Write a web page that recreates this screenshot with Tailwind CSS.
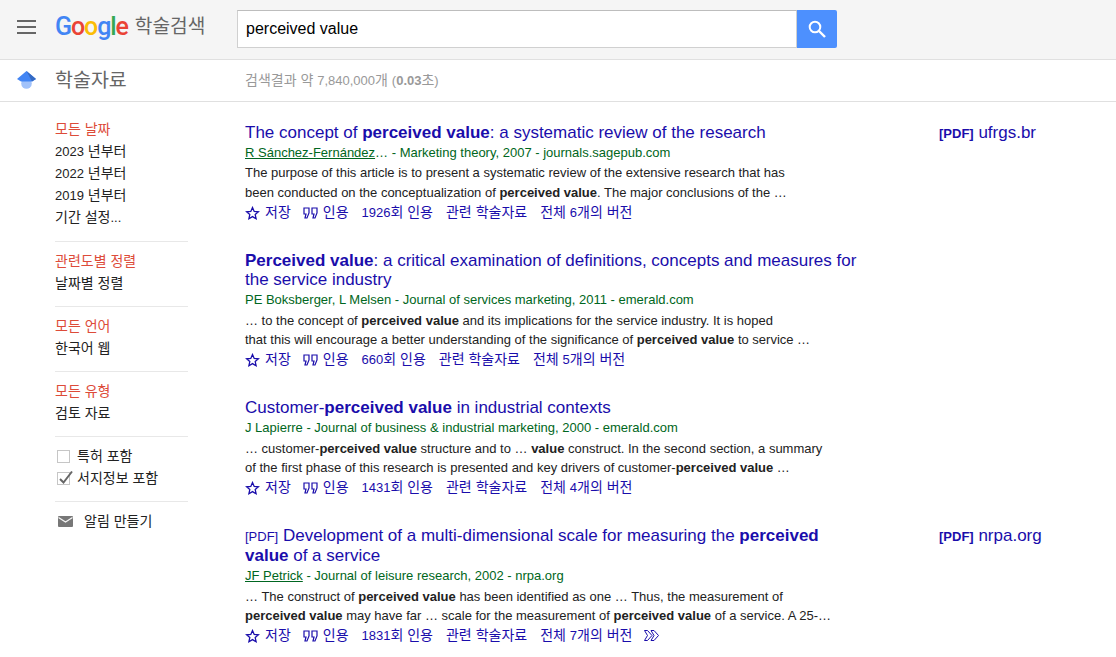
<!DOCTYPE html>
<html lang="ko">
<head>
    <meta charset="UTF-8">
    <title>Google 학술검색</title>
    <script src="https://cdn.jsdelivr.net/npm/@tailwindcss/browser@4"></script>
</head>
<body class="h-[657px] overflow-hidden bg-white font-['Liberation_Sans','Noto_Sans_CJK_KR',sans-serif] text-[13px] text-[#222]">

    <!-- 상단 검색 바 -->
    <header class="flex h-[60px] items-start border-b border-[#e0e0e0] bg-[#f5f5f5]">
        <div class="mt-[20px] ml-[17px] flex w-[19px] flex-col gap-[4px]">
            <span class="h-[2px] bg-[#666]"></span>
            <span class="h-[2px] bg-[#666]"></span>
            <span class="h-[2px] bg-[#666]"></span>
        </div>
        <div class="mt-[12px] ml-[19px] flex w-[182px] items-center text-[19.200px] leading-[30px] text-[#666]">
            <span class="font-['Roboto'] text-[25px] leading-[30px] font-medium tracking-[-1.100px]"><span class="text-[#4285f4]">G</span><span class="text-[#ea4335]">o</span><span class="text-[#fbbc05]">o</span><span class="text-[#4285f4]">g</span><span class="text-[#34a853]">l</span><span class="text-[#ea4335]">e</span></span>
            <span class="ml-[7px]">학술검색</span>
        </div>
        <div class="mt-[10px] flex h-[38px] w-[600px]">
            <div class="flex h-full w-[560px] items-center border border-[#d0d0d0] border-t-[#bdbdbd] bg-white pl-[8px] text-[16px] text-black">perceived value</div>
            <div class="flex h-full w-[40px] items-center justify-center rounded-r-[2px] bg-[#4d90fe]">
                <svg width="20" height="20" viewBox="0 0 20 20" fill="none" stroke="#fff"><circle cx="8" cy="8" r="5.3" stroke-width="2"/><path d="M12 12l6 6" stroke-width="2.4"/></svg>
            </div>
        </div>
    </header>

    <!-- 학술자료 / 결과 수 -->
    <div class="flex h-[42px] items-center border-b border-[#e0e0e0]">
        <svg class="ml-[17px]" width="19" height="19" viewBox="0 0 19 19">
            <circle cx="9.500" cy="12.500" r="5.300" fill="#a1c2fa"/>
            <path d="M0 8L9.500 0 19 8 15 10.500H4z" fill="#4285f4"/>
            <path d="M9.500 0L19 8 15 10.500z" fill="#356ac3"/>
        </svg>
        <div class="ml-[19px] w-[190px] text-[19.500px] text-[#666]">학술자료</div>
        <div class="text-[14px] text-[#999]">검색결과 약 <span class="text-[13px]">7,840,000</span>개 <span class="text-[13px]">(<b>0.03</b></span>초<span class="text-[13px]">)</span></div>
    </div>

    <div class="flex">
        <!-- 왼쪽 필터 -->
        <aside class="ml-[55px] w-[133px] pt-[16px] text-[14px] leading-[22px]">
            <div class="h-[22px] text-[#dd4b39]">모든 날짜</div>
            <div class="h-[22px]"><span class="text-[13px]">2023</span> 년부터</div>
            <div class="h-[22px]"><span class="text-[13px]">2022</span> 년부터</div>
            <div class="h-[22px]"><span class="text-[13px]">2019</span> 년부터</div>
            <div class="h-[22px]">기간 설정<span class="text-[13px]">...</span></div>
            <div class="mt-[13px] mb-[8px] border-t border-[#e8e8e8]"></div>
            <div class="h-[22px] text-[#dd4b39]">관련도별 정렬</div>
            <div class="h-[22px]">날짜별 정렬</div>
            <div class="mt-[12px] mb-[8px] border-t border-[#e8e8e8]"></div>
            <div class="h-[22px] text-[#dd4b39]">모든 언어</div>
            <div class="h-[22px]">한국어 웹</div>
            <div class="mt-[12px] mb-[8px] border-t border-[#e8e8e8]"></div>
            <div class="h-[22px] text-[#dd4b39]">모든 유형</div>
            <div class="h-[22px]">검토 자료</div>
            <div class="mt-[12px] mb-[8px] border-t border-[#e8e8e8]"></div>
            <div class="flex h-[22px] items-center">
                <span class="ml-[2px] h-[13px] w-[13px] border border-[#c6c6c6]"></span>
                <span class="ml-[7px]">특허 포함</span>
            </div>
            <div class="flex h-[22px] items-center">
                <span class="relative ml-[2px] h-[13px] w-[13px] border border-[#c6c6c6]">
                    <svg class="absolute -top-[3px] left-0" width="16" height="15" viewBox="0 0 16 15" fill="none"><path d="M2 9l3.500 3.500L14 1.500" stroke="#666" stroke-width="2"/></svg>
                </span>
                <span class="ml-[7px]">서지정보 포함</span>
            </div>
            <div class="mt-[12px] mb-[8px] border-t border-[#e8e8e8]"></div>
            <div class="flex h-[22px] items-center">
                <svg class="ml-[3px]" width="15" height="11" viewBox="0 0 15 11"><rect width="15" height="11" rx="1" fill="#777"/><path d="M0.500 1.500L7.500 6l7-4.500" fill="none" stroke="#f5f5f5" stroke-width="1.300"/></svg>
                <span class="ml-[11px]">알림 만들기</span>
            </div>
        </aside>

        <main class="ml-[57px] w-[871px] pt-[21px]">
            <!-- 결과 1 -->
            <article class="flex h-[128px]">
                <div class="w-[694px]">
                    <h3 class="text-[17px] leading-[20px] text-[#1a0dab]">The concept of <b>perceived value</b>: a systematic review of the research</h3>
                    <div class="leading-[20px] text-[#006621]"><u>R Sánchez-Fernández</u>… - Marketing theory, 2007 - journals.sagepub.com</div>
                    <p class="leading-[20px]">The purpose of this article is to present a systematic review of the extensive research that has<br>been conducted on the conceptualization of <b>perceived value</b>. The major conclusions of the …</p>
                    <div class="flex h-[20px] text-[14px] leading-[18px] text-[#1a0dab]">
                        <svg class="mt-[3px] mr-[5px]" width="15" height="14" viewBox="0 0 15 14" fill="none"><path d="M7.500 1.500l1.700 3.900 4.200.4-3.200 2.800.9 4.100-3.600-2.100-3.600 2.100.9-4.100L1.600 5.800l4.200-.4z" stroke="#1a0dab" stroke-width="1.300"/></svg>
                        <span>저장</span>
                        <svg class="mt-[4px] mr-[5px] ml-[12px]" width="15" height="12" viewBox="0 0 15 12" fill="none" stroke="#1a0dab" stroke-width="1.200"><path d="M1 1h5v5L4 11H2l1-4H1zM9 1h5v5l-2 5h-2l1-4H9z"/></svg>
                        <span>인용</span>
                        <span class="ml-[13px]"><span class="text-[13px]">1926</span>회 인용</span>
                        <span class="ml-[13px]">관련 학술자료</span>
                        <span class="ml-[13px]">전체 <span class="text-[13px]">6</span>개의 버전</span>
                    </div>
                </div>
                <div class="text-[17px] leading-[20px] text-[#1a0dab]"><b class="text-[13px]">[PDF]</b> ufrgs.br</div>
            </article>

            <!-- 결과 2 -->
            <article class="flex h-[147px]">
                <div class="w-[694px]">
                    <h3 class="w-[620px] pt-[0.250px] pb-[0.750px] text-[17px] leading-[19px] text-[#1a0dab]"><b>Perceived value</b>: a critical examination of definitions, concepts and measures for the service industry</h3>
                    <div class="leading-[20px] text-[#006621]">PE Boksberger, L Melsen - Journal of services marketing, 2011 - emerald.com</div>
                    <p class="pt-[1.250px] pb-[0.750px] leading-[19px]">… to the concept of <b>perceived value</b> and its implications for the service industry. It is hoped<br>that this will encourage a better understanding of the significance of <b>perceived value</b> to service …</p>
                    <div class="flex h-[20px] text-[14px] leading-[18px] text-[#1a0dab]">
                        <svg class="mt-[3px] mr-[5px]" width="15" height="14" viewBox="0 0 15 14" fill="none"><path d="M7.500 1.500l1.700 3.900 4.200.4-3.200 2.800.9 4.100-3.600-2.100-3.600 2.100.9-4.100L1.600 5.800l4.200-.4z" stroke="#1a0dab" stroke-width="1.300"/></svg>
                        <span>저장</span>
                        <svg class="mt-[4px] mr-[5px] ml-[12px]" width="15" height="12" viewBox="0 0 15 12" fill="none" stroke="#1a0dab" stroke-width="1.200"><path d="M1 1h5v5L4 11H2l1-4H1zM9 1h5v5l-2 5h-2l1-4H9z"/></svg>
                        <span>인용</span>
                        <span class="ml-[13px]"><span class="text-[13px]">660</span>회 인용</span>
                        <span class="ml-[13px]">관련 학술자료</span>
                        <span class="ml-[13px]">전체 <span class="text-[13px]">5</span>개의 버전</span>
                    </div>
                </div>
            </article>

            <!-- 결과 3 -->
            <article class="flex h-[128px]">
                <div class="w-[694px]">
                    <h3 class="text-[17px] leading-[20px] text-[#1a0dab]">Customer-<b>perceived value</b> in industrial contexts</h3>
                    <div class="leading-[20px] text-[#006621]">J Lapierre - Journal of business &amp; industrial marketing, 2000 - emerald.com</div>
                    <p class="pt-[1.250px] pb-[0.750px] leading-[19px]">… customer-<b>perceived value</b> structure and to … <b>value</b> construct. In the second section, a summary<br>of the first phase of this research is presented and key drivers of customer-<b>perceived value</b> …</p>
                    <div class="flex h-[20px] text-[14px] leading-[18px] text-[#1a0dab]">
                        <svg class="mt-[3px] mr-[5px]" width="15" height="14" viewBox="0 0 15 14" fill="none"><path d="M7.500 1.500l1.700 3.900 4.200.4-3.200 2.800.9 4.100-3.600-2.100-3.600 2.100.9-4.100L1.600 5.800l4.200-.4z" stroke="#1a0dab" stroke-width="1.300"/></svg>
                        <span>저장</span>
                        <svg class="mt-[4px] mr-[5px] ml-[12px]" width="15" height="12" viewBox="0 0 15 12" fill="none" stroke="#1a0dab" stroke-width="1.200"><path d="M1 1h5v5L4 11H2l1-4H1zM9 1h5v5l-2 5h-2l1-4H9z"/></svg>
                        <span>인용</span>
                        <span class="ml-[13px]"><span class="text-[13px]">1431</span>회 인용</span>
                        <span class="ml-[13px]">관련 학술자료</span>
                        <span class="ml-[13px]">전체 <span class="text-[13px]">4</span>개의 버전</span>
                    </div>
                </div>
            </article>

            <!-- 결과 4 -->
            <article class="flex">
                <div class="w-[694px]">
                    <h3 class="w-[600px] pt-[0.250px] pb-[0.750px] text-[17px] leading-[19px] text-[#1a0dab]"><span class="text-[13px]">[PDF]</span> Development of a multi-dimensional scale for measuring the <b>perceived value</b> of a service</h3>
                    <div class="leading-[20px] text-[#006621]"><u>JF Petrick</u> - Journal of leisure research, 2002 - nrpa.org</div>
                    <p class="pt-[1.250px] pb-[0.750px] leading-[19px]">… The construct of <b>perceived value</b> has been identified as one … Thus, the measurement of<br><b>perceived value</b> may have far … scale for the measurement of <b>perceived value</b> of a service. A 25-…</p>
                    <div class="flex h-[20px] text-[14px] leading-[18px] text-[#1a0dab]">
                        <svg class="mt-[3px] mr-[5px]" width="15" height="14" viewBox="0 0 15 14" fill="none"><path d="M7.500 1.500l1.700 3.900 4.200.4-3.200 2.800.9 4.100-3.600-2.100-3.600 2.100.9-4.100L1.600 5.800l4.200-.4z" stroke="#1a0dab" stroke-width="1.300"/></svg>
                        <span>저장</span>
                        <svg class="mt-[4px] mr-[5px] ml-[12px]" width="15" height="12" viewBox="0 0 15 12" fill="none" stroke="#1a0dab" stroke-width="1.200"><path d="M1 1h5v5L4 11H2l1-4H1zM9 1h5v5l-2 5h-2l1-4H9z"/></svg>
                        <span>인용</span>
                        <span class="ml-[13px]"><span class="text-[13px]">1831</span>회 인용</span>
                        <span class="ml-[13px]">관련 학술자료</span>
                        <span class="ml-[13px]">전체 <span class="text-[13px]">7</span>개의 버전</span>
                        <svg class="mt-[4px] ml-[12px]" width="15" height="11" viewBox="0 0 15 11" fill="none" stroke="#1a0dab" stroke-width="1"><path d="M.500 .500h3l4.500 5-4.500 5h-3l3-5zM7 .500h3l4.500 5-4.500 5H7l3-5z"/></svg>
                    </div>
                </div>
                <div class="text-[17px] leading-[20px] text-[#1a0dab]"><b class="text-[13px]">[PDF]</b> nrpa.org</div>
            </article>
        </main>
    </div>
</body>
</html>
